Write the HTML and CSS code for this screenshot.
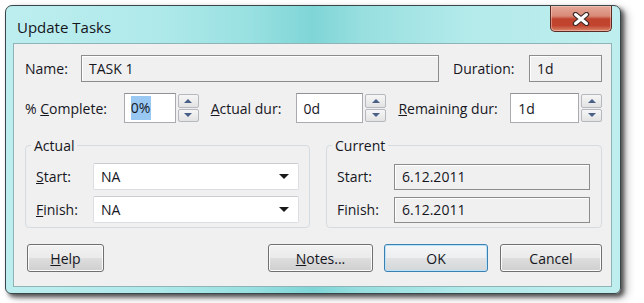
FILE: index.html
```html
<!DOCTYPE html>
<html lang="en">
<head>
  <meta charset="UTF-8" />
  <title>Update Tasks</title>
  <link rel="stylesheet" href="styles.css">
</head>
<body>
  <div class="window">
    <div class="titlebar">
      <span class="title">Update Tasks</span>
      <button class="close" type="button" aria-label="Close">
        <svg width="18" height="14" viewBox="0 0 18 14">
          <path d="M3.5 2.5 L14.5 11.5 M14.5 2.5 L3.5 11.5" stroke="#3b2a28" stroke-width="5.4" stroke-linecap="round"/>
          <path d="M3.5 2.5 L14.5 11.5 M14.5 2.5 L3.5 11.5" stroke="#ffffff" stroke-width="3" stroke-linecap="round"/>
        </svg>
      </button>
    </div>

    <div class="client">
      <div class="row row-name">
        <label class="lbl lbl-name">Name:</label>
        <div class="field readonly name-field">TASK 1</div>
        <label class="lbl lbl-duration">Duration:</label>
        <div class="field readonly duration-field">1d</div>
      </div>

      <div class="row row-dur">
        <label class="lbl lbl-complete">% <u>C</u>omplete:</label>
        <div class="field edit w-complete"><span class="selected">0%</span></div>
        <div class="spin"><span class="up"></span><span class="down"></span></div>

        <label class="lbl lbl-actual"><u>A</u>ctual dur:</label>
        <div class="field edit w-actual">0d</div>
        <div class="spin"><span class="up"></span><span class="down"></span></div>

        <label class="lbl lbl-remaining"><u>R</u>emaining dur:</label>
        <div class="field edit w-remaining">1d</div>
        <div class="spin"><span class="up"></span><span class="down"></span></div>
      </div>

      <div class="groups">
        <fieldset class="group group-actual">
          <legend>Actual</legend>
          <div class="group-row">
            <label class="lbl"><u>S</u>tart:</label>
            <div class="combo">NA<span class="arrow"></span></div>
          </div>
          <div class="group-row">
            <label class="lbl"><u>F</u>inish:</label>
            <div class="combo">NA<span class="arrow"></span></div>
          </div>
        </fieldset>

        <fieldset class="group group-current">
          <legend>Current</legend>
          <div class="group-row">
            <label class="lbl">Start:</label>
            <div class="field readonly date-field">6.12.2011</div>
          </div>
          <div class="group-row">
            <label class="lbl">Finish:</label>
            <div class="field readonly date-field">6.12.2011</div>
          </div>
        </fieldset>
      </div>

      <div class="buttons">
        <button class="btn btn-help" type="button"><u>H</u>elp</button>
        <span class="spacer"></span>
        <button class="btn btn-notes" type="button"><u>N</u>otes...</button>
        <button class="btn btn-ok" type="button">OK</button>
        <button class="btn btn-cancel" type="button">Cancel</button>
      </div>
    </div>
  </div>
</body>
</html>
```

FILE: styles.css
```css
html, body {
  margin: 0;
  padding: 0;
}

body {
  width: 644px;
  height: 303px;
  overflow: hidden;
  background: #ffffff;
  font-family: 'Open Sans', 'Noto Sans', sans-serif;
  font-size: 14px;
  color: #16161e;
}

.window {
  margin: 5px 0 0 5px;
  width: 616px;
  height: 289px;
  box-sizing: border-box;
  border: 1px solid #39474a;
  border-radius: 7px 7px 6px 6px;
  background: linear-gradient(90deg, #bdeeef 0%, #afe9ea 25%, #98e0e1 40%, #7fd5d6 50%, #98dfe0 58%, #b3eaea 75%, #bfeeee 100%);
  box-shadow: 3px 3px 4px rgba(0, 0, 0, 0.6), 6px 4px 8px rgba(0, 0, 0, 0.25);
  padding: 0 8px 6px 7px;
  display: flex;
  flex-direction: column;
}

.titlebar {
  height: 37px;
  display: flex;
  justify-content: space-between;
  align-items: flex-start;
}

.title {
  font-size: 15px;
  margin: 11px 0 0 4px;
  color: #15151c;
}

.close {
  width: 62px;
  height: 26px;
  padding: 0;
  border: 1px solid #5b2b24;
  border-top: none;
  border-radius: 0 0 5px 5px;
  background: linear-gradient(#e6a898 0%, #d88a78 40%, #c0432d 52%, #c2442e 78%, #d8876c 100%);
  display: flex;
  align-items: center;
  justify-content: center;
  box-shadow: inset 0 0 0 1px rgba(255, 220, 210, 0.45);
}

.client {
  flex: 1;
  background: #f0f0f0;
  border: 1px solid #8fb4b8;
  padding: 0 9px 0 11px;
}

.row {
  display: flex;
  align-items: center;
}

.row-name {
  margin-top: 11px;
  height: 27px;
}

.lbl {
  white-space: nowrap;
}

.lbl-name { width: 56px; }
.lbl-duration { width: 76px; margin-left: 14px; }
.lbl-complete { width: 99px; }
.lbl-actual { width: 85px; margin-left: 12px; }
.lbl-remaining { width: 112px; margin-left: 12px; }

.field {
  box-sizing: border-box;
  height: 100%;
  display: flex;
  align-items: center;
  padding-left: 7px;
}

.readonly {
  background: #f0f0f0;
  border: 1px solid #8c8c8c;
  box-shadow: inset 1px 1px 0 #ffffff;
}

.name-field { width: 358px; }
.duration-field { width: 73px; }

.row-dur {
  margin-top: 11px;
  height: 30px;
}

.edit {
  background: #ffffff;
  border: 1px solid #a9abb0;
  border-top-color: #8f9196;
}

.w-complete { width: 52px; padding-left: 6px; }
.w-actual { width: 68px; }
.w-remaining { width: 69px; }

.selected {
  background: #99c9f2;
  padding: 2px 1px 3px 0;
}

.spin {
  width: 21px;
  height: 28px;
  margin-left: 2px;
  display: flex;
  flex-direction: column;
  gap: 1px;
}

.spin span {
  flex: 1;
  box-sizing: border-box;
  border: 1px solid #b5b8be;
  border-radius: 2px;
  background: linear-gradient(#f6f6f6, #e3e3e3);
  display: flex;
  align-items: center;
  justify-content: center;
}

.spin .up::after,
.spin .down::after {
  content: "";
  border-left: 4px solid transparent;
  border-right: 4px solid transparent;
}

.spin .up::after { border-bottom: 4px solid #4a5f86; }
.spin .down::after { border-top: 4px solid #4a5f86; }

.groups {
  display: flex;
  gap: 16px;
  margin-top: 13px;
}

.group {
  margin: 0;
  border: 1px solid #d5dce1;
  border-radius: 4px;
  padding: 8px 0 4px 10px;
  height: 92px;
  box-sizing: border-box;
}

.group legend {
  padding: 0 3px;
  margin-left: -5px;
}

.group-actual { width: 285px; }
.group-current { width: 276px; }

.group-row {
  display: flex;
  align-items: center;
  height: 27px;
  margin-bottom: 6px;
}

.group-row .lbl { width: 57px; }

.combo {
  box-sizing: border-box;
  width: 206px;
  height: 27px;
  background: #ffffff;
  border: 1px solid #dadde2;
  border-top-color: #c9ccd1;
  border-radius: 2px;
  display: flex;
  align-items: center;
  padding-left: 7px;
}

.combo .arrow {
  margin-left: auto;
  margin-right: 9px;
  border-left: 5px solid transparent;
  border-right: 5px solid transparent;
  border-top: 5px solid #1a1a1a;
}

.date-field {
  width: 196px;
  height: 26px;
}

.buttons {
  display: flex;
  margin-top: 16px;
  height: 28px;
}

.spacer { flex: 1; }

.btn {
  box-sizing: border-box;
  height: 28px;
  font-family: inherit;
  font-size: 14px;
  color: #16161e;
  border: 1px solid #707070;
  border-radius: 3px;
  background: linear-gradient(#f2f2f2 0%, #ebebeb 48%, #dddddd 52%, #cfcfcf 100%);
  box-shadow: inset 0 0 0 1px #fbfbfb;
  padding: 0;
}

.btn-help { width: 77px; margin-left: 2px; }
.btn-notes { width: 105px; }
.btn-ok {
  width: 104px;
  margin-left: 11px;
  border-color: #3c7fb1;
  box-shadow: inset 0 0 0 1px #b9e3f8;
  background: linear-gradient(#f4f6f7 0%, #edeff0 48%, #e0e2e3 52%, #d4d7d9 100%);
}
.btn-cancel { width: 102px; margin-left: 12px; }
```
